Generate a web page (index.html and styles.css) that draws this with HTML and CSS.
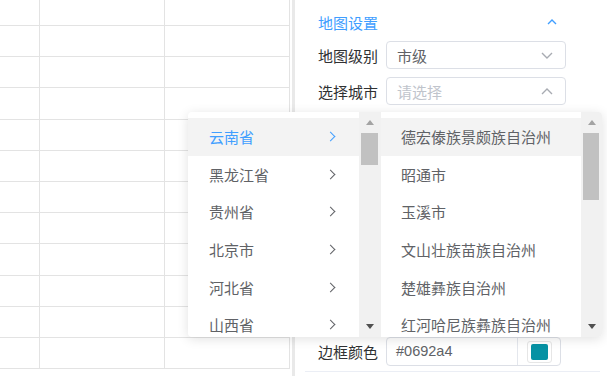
FILE: index.html
```html
<!DOCTYPE html>
<html lang="zh">
<head>
  <meta charset="UTF-8">
  <meta name="viewport" content="width=device-width, initial-scale=1.0">
  <title>地图设置</title>
  <link rel="stylesheet" href="styles.css">
</head>
<body>
  <div class="page">
    <div class="sheet" id="sheet"></div>
    <div class="splitter"></div>

    <div class="panel">
      <div class="section-head">
        <span>地图设置</span>
        <svg class="chev" width="10" height="6" viewBox="0 0 10 6"><polyline points="1,5 5,1 9,5" fill="none" stroke="#409eff" stroke-width="1.4"/></svg>
      </div>

      <div class="form-row">
        <label>地图级别</label>
        <div class="select">
          <span class="value">市级</span>
          <svg width="12" height="7" viewBox="0 0 12 7"><polyline points="1,1 6,6 11,1" fill="none" stroke="#a8abb2" stroke-width="1.4"/></svg>
        </div>
      </div>

      <div class="form-row">
        <label>选择城市</label>
        <div class="select">
          <span class="placeholder">请选择</span>
          <svg width="12" height="7" viewBox="0 0 12 7"><polyline points="1,6 6,1 11,6" fill="none" stroke="#a8abb2" stroke-width="1.4"/></svg>
        </div>
      </div>

      <div class="form-row color-row">
        <label>边框颜色</label>
        <div class="color-input">
          <span class="color-text">#0692a4</span>
          <div class="picker">
            <div class="picker-box"><div class="swatch"></div></div>
          </div>
        </div>
      </div>
      <div class="divider"></div>
    </div>

    <div class="cascader">
      <div class="menu">
        <ul class="menu-list narrow">
          <li class="item active"><span>云南省</span><i class="arrow"></i></li>
          <li class="item"><span>黑龙江省</span><i class="arrow"></i></li>
          <li class="item"><span>贵州省</span><i class="arrow"></i></li>
          <li class="item"><span>北京市</span><i class="arrow"></i></li>
          <li class="item"><span>河北省</span><i class="arrow"></i></li>
          <li class="item"><span>山西省</span><i class="arrow"></i></li>
        </ul>
        <div class="scrollbar">
          <div class="sb-btn"><i class="tri-up"></i></div>
          <div class="sb-track"><div class="sb-thumb" style="height:32px"></div></div>
          <div class="sb-btn"><i class="tri-down"></i></div>
        </div>
      </div>
      <div class="menu">
        <ul class="menu-list wide">
          <li class="item hover"><span>德宏傣族景颇族自治州</span></li>
          <li class="item"><span>昭通市</span></li>
          <li class="item"><span>玉溪市</span></li>
          <li class="item"><span>文山壮族苗族自治州</span></li>
          <li class="item"><span>楚雄彝族自治州</span></li>
          <li class="item"><span>红河哈尼族彝族自治州</span></li>
        </ul>
        <div class="scrollbar thin">
          <div class="sb-btn"><i class="tri-up"></i></div>
          <div class="sb-track"><div class="sb-thumb" style="height:67px"></div></div>
          <div class="sb-btn"><i class="tri-down"></i></div>
        </div>
      </div>
    </div>
  </div>

  <script>
    const numberOfRows = 12;
    const numberOfCols = 3;

    function createSheet() {
      const sheet = document.getElementById('sheet');
      for (let r = 0; r < numberOfRows; r++) {
        for (let c = 0; c < numberOfCols; c++) {
          const cell = document.createElement('div');
          cell.className = 'cell';
          sheet.appendChild(cell);
        }
      }
    }

    createSheet();
  </script>
</body>
</html>
```

FILE: styles.css
```css
body {
  margin: 0;
  padding: 0;
  background-color: #fff;
  overflow: hidden;
  font-family: "Liberation Sans", "Noto Sans CJK SC", sans-serif;
  font-size: 15px;
}

.page {
  position: relative;
  display: flex;
  height: 376px;
  overflow: hidden;
}

/* spreadsheet */
.sheet {
  display: grid;
  grid-template-columns: 40px 125px 125px;
  grid-template-rows: 26px repeat(11, 31.2px);
  width: 290px;
  flex: none;
  align-content: start;
}

.cell {
  border-right: 1px solid #e3e3e3;
  border-bottom: 1px solid #e3e3e3;
}

.splitter {
  width: 3px;
  margin-left: 2px;
  background-color: #e9e9e9;
  flex: none;
}

/* settings panel */
.panel {
  flex: 1;
  padding: 3px 40px 0 23px;
}

.section-head {
  display: flex;
  align-items: center;
  justify-content: space-between;
  height: 38px;
  padding-right: 10px;
  color: #409eff;
}

.form-row {
  display: flex;
  align-items: center;
  margin-bottom: 8px;
}

.form-row label {
  width: 68px;
  flex: none;
  color: #303133;
}

.select {
  display: flex;
  align-items: center;
  justify-content: space-between;
  box-sizing: border-box;
  width: 180px;
  height: 28px;
  padding: 0 12px 0 10px;
  border: 1px solid #dcdfe6;
  border-radius: 4px;
}

.select .value {
  color: #606266;
}

.select .placeholder {
  color: #c0c4cc;
}

.color-row {
  margin-top: 232px;
  margin-bottom: 0;
}

.color-input {
  display: flex;
  box-sizing: border-box;
  width: 175px;
  height: 29px;
  border: 1px solid #dcdfe6;
  border-radius: 4px;
}

.color-text {
  flex: 1;
  padding-left: 9px;
  line-height: 27px;
  font-size: 14.5px;
  color: #606266;
}

.picker {
  display: flex;
  align-items: center;
  justify-content: center;
  width: 42px;
  border-left: 1px solid #e4e7ed;
}

.picker-box {
  box-sizing: border-box;
  width: 25px;
  height: 22px;
  padding: 2px 3px;
  border: 1px solid #e6e6e6;
  border-radius: 3px;
}

.swatch {
  width: 100%;
  height: 100%;
  background-color: #0692a4;
  border-radius: 2px;
}

.divider {
  height: 1px;
  margin: 5px -33px 0 -13px;
  background-color: #ebeef5;
}

/* cascader dropdown */
.cascader {
  position: absolute;
  left: 188px;
  top: 112px;
  width: 414px;
  height: 225px;
  display: flex;
  background-color: #fff;
  border-radius: 4px;
  box-shadow: 0 2px 12px 0 rgba(0, 0, 0, 0.12);
  overflow: hidden;
  z-index: 10;
}

.menu {
  display: flex;
  height: 100%;
}

.menu-list {
  list-style: none;
  margin: 0;
  padding: 6px 0 0;
}

.menu-list.narrow {
  width: 171px;
}

.menu-list.wide {
  width: 200px;
}

.item {
  display: flex;
  align-items: center;
  justify-content: space-between;
  height: 37.6px;
  padding: 0 23px 0 21px;
  color: #606266;
}

.menu-list.wide .item {
  padding-left: 20px;
}

.item.active {
  color: #409eff;
  background-color: #f3f3f3;
}

.item.hover {
  background-color: #f3f3f3;
}

.arrow {
  width: 6px;
  height: 6px;
  margin-right: 2px;
  border-top: 1.3px solid currentColor;
  border-right: 1.3px solid currentColor;
  transform: rotate(45deg);
}

.scrollbar {
  display: flex;
  flex-direction: column;
  width: 22px;
  background-color: #f1f1f1;
}

.scrollbar.thin {
  width: 21px;
}

.sb-btn {
  display: flex;
  align-items: center;
  justify-content: center;
  height: 21px;
  flex: none;
}

.sb-track {
  flex: 1;
  padding: 0 3px 0 2px;
}

.sb-thumb {
  background-color: #c1c1c1;
}

.tri-up {
  border-left: 4.5px solid transparent;
  border-right: 4.5px solid transparent;
  border-bottom: 5px solid #a3a3a3;
}

.tri-down {
  border-left: 4.5px solid transparent;
  border-right: 4.5px solid transparent;
  border-top: 5px solid #505050;
}
```
